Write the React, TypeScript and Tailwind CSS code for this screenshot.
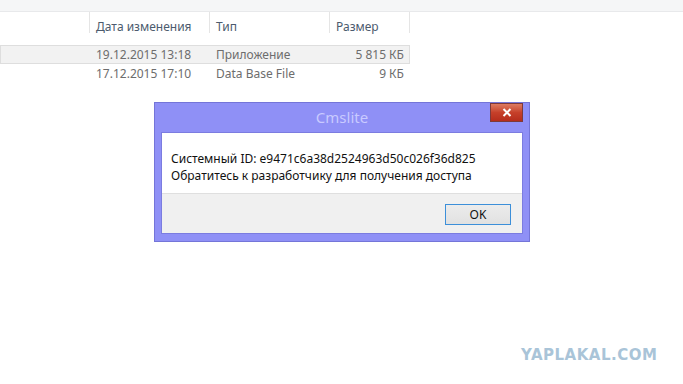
const columns = [
  { title: 'Дата изменения', width: 'w-[120px]' },
  { title: 'Тип', width: 'w-[120px]' },
  { title: 'Размер', width: 'w-[80px]' },
];

const files = [
  { date: '19.12.2015 13:18', type: 'Приложение', size: '5 815 КБ', selected: true },
  { date: '17.12.2015 17:10', type: 'Data Base File', size: '9 КБ', selected: false },
];

export default function App() {
  return (
    <div
      className="relative h-[384px] w-[683px] overflow-hidden bg-white"
      style={{ fontFamily: '"Noto Sans", "Open Sans", sans-serif' }}
    >
      {/* explorer */}
      <div className="h-[12px] border-b border-[#e8e9eb] bg-[#f5f6f7]" />
      <div className="flex h-[21px] text-[12px] text-[#4c5b6e]">
        <div className="w-[90px] border-r border-[#e5e5e5]" />
        {columns.map((col) => (
          <div
            key={col.title}
            className={`${col.width} border-r border-[#e5e5e5] pl-[6px] pt-[3px] leading-[24px]`}
          >
            {col.title}
          </div>
        ))}
      </div>
      <div className="mt-[12px] w-[410px] text-[12px] text-[#6d6d6d]">
        {files.map((file) => (
          <div
            key={file.date}
            className={`flex h-[19px] items-center border ${
              file.selected ? 'border-[#dedede] bg-[#f2f2f2]' : 'border-transparent'
            }`}
          >
            <div className="w-[95px]" />
            <div className="w-[120px]">{file.date}</div>
            <div className="w-[120px]">{file.type}</div>
            <div className="w-[68px] text-right">{file.size}</div>
          </div>
        ))}
      </div>

      {/* message box */}
      <div className="absolute left-[154px] top-[102px] flex h-[140px] w-[376px] flex-col border border-[#7475d8] bg-[#8f90f6] px-[6px] pb-[7px]">
        <div className="relative flex h-[29px] items-center justify-center">
          <span className="text-[15px] text-[#c9caff]">Cmslite</span>
          <div className="absolute right-[0px] top-[0px] flex h-[19px] w-[33px] items-center justify-center border border-[#7d3a3a] bg-gradient-to-b from-[#dd7a60] via-[#c6402a] to-[#b52d1c]">
            <svg width="10" height="9" viewBox="0 0 10 9">
              <path d="M1.5 1 L8.5 8 M8.5 1 L1.5 8" stroke="#fff" strokeWidth="2" />
            </svg>
          </div>
        </div>
        <div className="flex flex-1 flex-col border border-[#7b7ce0]">
          <div className="h-[60px] bg-white pl-[9px] pt-[17px] text-[12px] leading-[17px] text-[#111]">
            <div>Системный ID: e9471c6a38d2524963d50c026f36d825</div>
            <div>Обратитесь к разработчику для получения доступа</div>
          </div>
          <div className="flex flex-1 items-start justify-end border-t border-[#dfdfdf] bg-[#f0f0f0] pr-[11px] pt-[10px]">
            <button className="h-[21px] w-[66px] border border-[#3c8fd9] bg-gradient-to-b from-[#ececec] to-[#e1e1e1] text-[12px] text-[#111]">
              OK
            </button>
          </div>
        </div>
      </div>

      {/* watermark */}
      <div
        className="absolute left-[521px] top-[344px] text-[15px] font-black tracking-[0.5px] text-[#a9c4d8]"
        style={{ fontFamily: '"DejaVu Sans", sans-serif' }}
      >
        YAPLAKAL.COM
      </div>
    </div>
  );
}
